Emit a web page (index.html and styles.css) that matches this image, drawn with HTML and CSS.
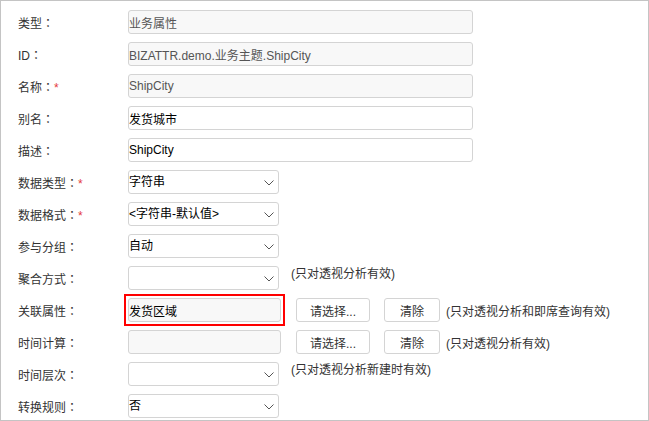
FILE: index.html
```html
<!DOCTYPE html>
<html lang="zh-CN">
<head>
    <meta charset="UTF-8">
    <meta name="viewport" content="width=device-width, initial-scale=1.0">
    <title>业务属性</title>
    <link rel="stylesheet" href="styles.css">
</head>
<body>
    <div class="panel">
        <div class="row">
            <label class="label">类型<span class="colon" lang="zh-TW">：</span></label>
            <input class="field long" type="text" value="业务属性" disabled>
        </div>
        <div class="row">
            <label class="label">ID<span class="colon" lang="zh-TW">：</span></label>
            <input class="field long" type="text" value="BIZATTR.demo.业务主题.ShipCity" disabled>
        </div>
        <div class="row">
            <label class="label">名称<span class="colon" lang="zh-TW">：</span><span class="req">*</span></label>
            <input class="field long" type="text" value="ShipCity" disabled>
        </div>
        <div class="row">
            <label class="label">别名<span class="colon" lang="zh-TW">：</span></label>
            <input class="field long" type="text" value="发货城市">
        </div>
        <div class="row">
            <label class="label">描述<span class="colon" lang="zh-TW">：</span></label>
            <input class="field long" type="text" value="ShipCity">
        </div>
        <div class="row">
            <label class="label">数据类型<span class="colon" lang="zh-TW">：</span><span class="req">*</span></label>
            <div class="select-wrap">
                <select class="select"><option>字符串</option></select>
                <svg class="arrow" width="10" height="6" viewBox="0 0 10 6"><path d="M0.5 0.5 L5 5 L9.5 0.5" fill="none" stroke="#555" stroke-width="1"/></svg>
            </div>
        </div>
        <div class="row">
            <label class="label">数据格式<span class="colon" lang="zh-TW">：</span><span class="req">*</span></label>
            <div class="select-wrap">
                <select class="select"><option>&lt;字符串-默认值&gt;</option></select>
                <svg class="arrow" width="10" height="6" viewBox="0 0 10 6"><path d="M0.5 0.5 L5 5 L9.5 0.5" fill="none" stroke="#555" stroke-width="1"/></svg>
            </div>
        </div>
        <div class="row">
            <label class="label">参与分组<span class="colon" lang="zh-TW">：</span></label>
            <div class="select-wrap">
                <select class="select"><option>自动</option></select>
                <svg class="arrow" width="10" height="6" viewBox="0 0 10 6"><path d="M0.5 0.5 L5 5 L9.5 0.5" fill="none" stroke="#555" stroke-width="1"/></svg>
            </div>
        </div>
        <div class="row">
            <label class="label">聚合方式<span class="colon" lang="zh-TW">：</span></label>
            <div class="select-wrap">
                <select class="select"><option></option></select>
                <svg class="arrow" width="10" height="6" viewBox="0 0 10 6"><path d="M0.5 0.5 L5 5 L9.5 0.5" fill="none" stroke="#555" stroke-width="1"/></svg>
            </div>
            <span class="note note-select">(只对透视分析有效)</span>
        </div>
        <div class="row">
            <label class="label">关联属性<span class="colon" lang="zh-TW">：</span></label>
            <span class="marked">
                <input class="field short" type="text" value="发货区域" disabled>
            </span>
            <button class="btn btn-pick">请选择...</button>
            <button class="btn btn-clear">清除</button>
            <span class="note">(只对透视分析和即席查询有效)</span>
        </div>
        <div class="row">
            <label class="label">时间计算<span class="colon" lang="zh-TW">：</span></label>
            <input class="field short" type="text" value="" disabled>
            <button class="btn btn-pick">请选择...</button>
            <button class="btn btn-clear">清除</button>
            <span class="note">(只对透视分析有效)</span>
        </div>
        <div class="row">
            <label class="label">时间层次<span class="colon" lang="zh-TW">：</span></label>
            <div class="select-wrap">
                <select class="select"><option></option></select>
                <svg class="arrow" width="10" height="6" viewBox="0 0 10 6"><path d="M0.5 0.5 L5 5 L9.5 0.5" fill="none" stroke="#555" stroke-width="1"/></svg>
            </div>
            <span class="note note-select">(只对透视分析新建时有效)</span>
        </div>
        <div class="row">
            <label class="label">转换规则<span class="colon" lang="zh-TW">：</span></label>
            <div class="select-wrap">
                <select class="select"><option>否</option></select>
                <svg class="arrow" width="10" height="6" viewBox="0 0 10 6"><path d="M0.5 0.5 L5 5 L9.5 0.5" fill="none" stroke="#555" stroke-width="1"/></svg>
            </div>
        </div>
    </div>
</body>
</html>
```

FILE: styles.css
```css
* {
    box-sizing: border-box;
}
body {
    margin: 0;
    font-family: "Liberation Sans", "Noto Sans CJK SC", sans-serif;
    font-size: 12px;
    color: #333;
}
.panel {
    width: 649px;
    height: 421px;
    border: 1px solid #c4c4c4;
    padding-top: 9px;
    overflow: hidden;
}
.row {
    display: flex;
    align-items: center;
    height: 24px;
    margin-bottom: 8px;
}
.label {
    width: 127px;
    padding-left: 17px;
    flex-shrink: 0;
    color: #333;
}
.colon {
    font-family: "Noto Sans CJK TC", sans-serif;
}
.req {
    color: #e4393c;
}
.field {
    height: 24px;
    padding: 0;
    border: 1px solid #d4d4d4;
    border-radius: 3px;
    background-color: #fff;
    font: inherit;
    color: #000;
}
.field:disabled {
    background-color: #f8f8f8;
    color: #555;
}
.marked .field {
    color: #000;
}
.long {
    width: 345px;
}
.short {
    width: 153px;
}
.marked {
    display: flex;
    margin: 0 -4px;
    padding: 2px;
    border: 2px solid #f00;
}
.select-wrap {
    position: relative;
    width: 151px;
    height: 24px;
}
.select {
    width: 100%;
    height: 24px;
    padding: 0;
    border: 1px solid #d4d4d4;
    border-radius: 3px;
    background-color: #fff;
    font: inherit;
    color: #000;
    appearance: none;
    -webkit-appearance: none;
}
.arrow {
    position: absolute;
    right: 5px;
    top: 10px;
    pointer-events: none;
}
.btn {
    height: 24px;
    padding: 0;
    border: 1px solid #d4d4d4;
    border-radius: 3px;
    background-color: #fff;
    font: inherit;
    color: #333;
    cursor: pointer;
}
.btn-pick {
    width: 74px;
    margin-left: 15px;
}
.btn-clear {
    width: 56px;
    margin-left: 14px;
}
.note {
    margin-left: 6px;
    color: #333;
}
.note-select {
    margin-left: 12px;
    align-self: flex-start;
    line-height: 16px;
}
```
